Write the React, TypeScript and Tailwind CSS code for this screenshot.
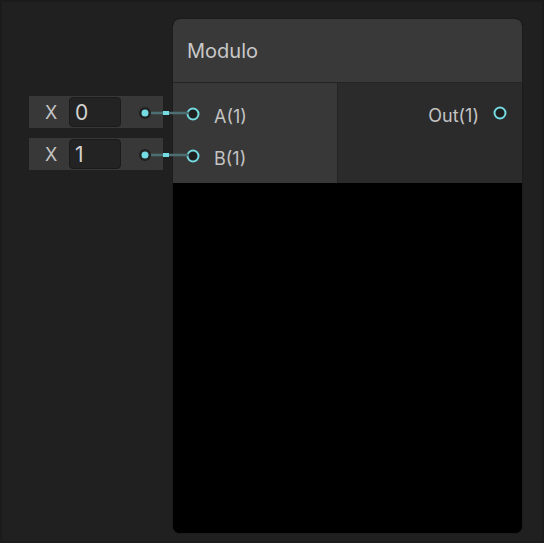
import React from "react";

const CYAN = "#74dbe2";

const Port = () => (
  <svg width="16" height="16" viewBox="0 0 16 16" className="shrink-0">
    <circle cx="8" cy="8" r="5.5" fill="#1f1f1f" stroke={CYAN} strokeWidth="2" />
  </svg>
);

const InlineField = ({ value }: { value: string }) => (
  <div className="flex items-center h-[32px] w-[134px] bg-[#383838] pl-[16px]">
    <span className="text-[18px] text-[#c4c4c4] w-[24px] pt-[1px]">X</span>
    <div className="flex items-center h-[30px] w-[52px] rounded-[4px] bg-[#232323] border border-[#1a1a1a] px-[5px] pt-[1px] text-[21px] text-[#d2d2d2]">
      {value}
    </div>
  </div>
);

// wire from the inline field to the input port
const Wire = () => (
  <svg width="60" height="16" viewBox="0 0 60 16" className="block">
    <line x1="6" y1="8" x2="52" y2="8" stroke="#4c6f73" strokeWidth="2.5" />
    <rect x="26" y="6" width="6" height="4" fill={CYAN} />
    <circle cx="8" cy="8" r="6" fill="#202020" />
    <circle cx="8" cy="8" r="3.5" fill={CYAN} />
  </svg>
);

export default function App() {
  return (
    <div
      className="relative w-[544px] h-[543px] bg-[#202020] border-2 border-[#1b1b1b] overflow-hidden"
      style={{ fontFamily: "Inter, 'Noto Sans', sans-serif" }}
    >
      {/* inline input fields */}
      <div className="absolute left-[27px] top-[94px] flex flex-col gap-[10px]">
        <InlineField value="0" />
        <InlineField value="1" />
      </div>

      {/* node */}
      <div className="absolute left-[170px] top-[16px] w-[351px] h-[516px] rounded-[8px] overflow-hidden border border-[#1c1c1c] flex flex-col bg-black">
        <div className="h-[64px] bg-[#393939] border-b border-[#242424] flex items-center pl-[14px] text-[20px] text-[#c8c8c8]">
          Modulo
        </div>
        <div className="h-[100px] flex">
          <div className="w-[164px] bg-[#383838] pt-[10px] flex flex-col">
            <div className="h-[42px] flex items-center pl-[12px] gap-[13px] text-[18px] text-[#c4c4c4]">
              <Port />
              <span className="pt-[4px]">A(1)</span>
            </div>
            <div className="h-[42px] flex items-center pl-[12px] gap-[13px] text-[18px] text-[#c4c4c4]">
              <Port />
              <span className="pt-[4px]">B(1)</span>
            </div>
          </div>
          <div className="flex-1 bg-[#2b2b2b] border-l border-[#242424] pt-[9px]">
            <div className="h-[42px] flex items-center justify-end pr-[14px] gap-[13px] text-[18px] text-[#c4c4c4]">
              <span className="pt-[4px]">Out(1)</span>
              <Port />
            </div>
          </div>
        </div>
        <div className="flex-1 bg-black" />
      </div>

      {/* wires */}
      <div className="absolute left-[135px] top-[103px] flex flex-col gap-[26px]">
        <Wire />
        <Wire />
      </div>
    </div>
  );
}
